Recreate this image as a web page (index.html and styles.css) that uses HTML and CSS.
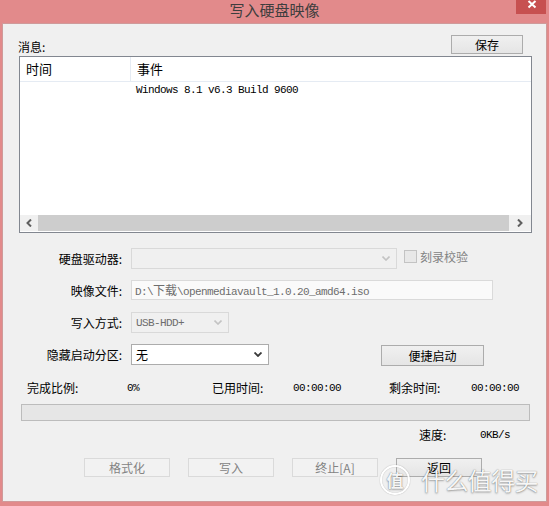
FILE: index.html
```html
<!DOCTYPE html>
<html lang="zh-CN">
<head>
<meta charset="utf-8">
<title>写入硬盘映像</title>
<link rel="stylesheet" href="styles.css">
</head>
<body>
<div class="titlebar">写入硬盘映像
  <div class="close"><svg width="30" height="14" viewBox="0 0 30 14"><path d="M12.5 1 L19.5 7.5 M19.5 1 L12.5 7.5" stroke="#fff" stroke-width="2" fill="none"/></svg></div>
</div>
<div class="client">
  <div class="top">
    <span class="lbl-msg">消息:</span>
    <div class="btn save">保存</div>
  </div>
  <div class="list">
    <div class="list-head">
      <div class="col1">时间</div>
      <div class="col2">事件</div>
    </div>
    <div class="list-body">
      <div class="row mono">Windows 8.1 v6.3 Build 9600</div>
    </div>
    <div class="hscroll">
      <div class="sb-btn sb-left"><svg width="6" height="8" viewBox="0 0 6 8"><path d="M5 0.5 L1.5 4 L5 7.5" stroke="#5f5f5f" stroke-width="2" fill="none"/></svg></div>
      <div class="sb-thumb"></div>
      <div class="sb-btn sb-right"><svg width="6" height="8" viewBox="0 0 6 8"><path d="M1 0.5 L4.5 4 L1 7.5" stroke="#5f5f5f" stroke-width="2" fill="none"/></svg></div>
    </div>
  </div>

  <div class="form">
    <div class="lbl">硬盘驱动器:</div>
    <div class="ctl">
      <div class="combo disabled w-drive"><span></span><svg width="8" height="5" viewBox="0 0 8 5"><path d="M0.5 0.5 L4 4 L7.5 0.5" stroke="#c3c3c3" stroke-width="1.6" fill="none"/></svg></div>
      <div class="check"></div>
      <span class="check-lbl">刻录校验</span>
    </div>

    <div class="lbl">映像文件:</div>
    <div class="ctl">
      <div class="input"><span class="mono">D:\</span>下载<span class="mono">\openmediavault_1.0.20_amd64.iso</span></div>
    </div>

    <div class="lbl">写入方式:</div>
    <div class="ctl">
      <div class="combo disabled w-mode"><span class="mono">USB-HDD+</span><svg width="8" height="5" viewBox="0 0 8 5"><path d="M0.5 0.5 L4 4 L7.5 0.5" stroke="#c3c3c3" stroke-width="1.6" fill="none"/></svg></div>
    </div>

    <div class="lbl">隐藏启动分区:</div>
    <div class="ctl">
      <div class="combo enabled w-hide"><span>无</span><svg width="8" height="5" viewBox="0 0 8 5"><path d="M0.5 0.5 L4 4 L7.5 0.5" stroke="#3a3a3a" stroke-width="1.8" fill="none"/></svg></div>
      <div class="btn quick">便捷启动</div>
    </div>
  </div>

  <div class="stats">
    <span>完成比例:</span>
    <span class="mono">0%</span>
    <span>已用时间:</span>
    <span class="mono">00:00:00</span>
    <span>剩余时间:</span>
    <span class="mono">00:00:00</span>
  </div>

  <div class="progress"></div>

  <div class="speed">
    <span class="speed-lbl">速度:</span>
    <span class="mono">0KB/s</span>
  </div>

  <div class="actions">
    <div class="btn act off">格式化</div>
    <div class="btn act off">写入</div>
    <div class="btn act off">终止[A]</div>
    <div class="btn act">返回</div>
  </div>
</div>

<div class="watermark">
  <div class="wm-logo">值</div>
  <div class="wm-text">什么值得买</div>
</div>
</body>
</html>
```

FILE: styles.css
```css
* { box-sizing: border-box; }
html, body { margin: 0; padding: 0; }
body {
  width: 549px;
  height: 506px;
  overflow: hidden;
  position: relative;
  background: #e28a8b;
  font-family: "Noto Sans CJK SC", "Liberation Sans", sans-serif;
  font-size: 12px;
  color: #000;
}
.mono {
  font-family: "Liberation Mono", "Noto Sans CJK SC", monospace;
  font-size: 11px;
  letter-spacing: -0.6px;
}
.titlebar {
  position: relative;
  height: 23px;
  line-height: 19px;
  text-align: center;
  font-size: 15px;
  color: #3e3e3e;
}
.close {
  position: absolute;
  top: 0;
  right: 3px;
  width: 30px;
  height: 14px;
  background: #c75050;
  line-height: 0;
}
.client {
  margin: 0 2px;
  height: 479px;
  background: #f0f0f0;
  border: 1px solid #cf9a9a;
}
.top {
  display: flex;
  justify-content: space-between;
  align-items: flex-end;
  height: 19px;
  margin: 11px 23px 0 15px;
}
.lbl-msg {
  line-height: 12px;
  margin-bottom: 1px;
}
.btn {
  height: 19px;
  border: 1px solid #acacac;
  background: linear-gradient(#f0f0f0, #e5e5e5);
  text-align: center;
  line-height: 17px;
  font-size: 12px;
}
.save { width: 72px; }

.list {
  margin: 2px 14px 0 16px;
  height: 177px;
  border: 1px solid #828790;
  background: #fff;
  display: flex;
  flex-direction: column;
}
.list-head {
  height: 25px;
  display: flex;
  border-bottom: 1px solid #e5ebf3;
  font-size: 13px;
  line-height: 24px;
}
.col1 {
  width: 111px;
  padding-left: 6px;
  border-right: 1px solid #e5ebf3;
}
.col2 { padding-left: 6px; }
.list-body {
  flex: 1;
  padding: 2px 0 0 116px;
}
.row { line-height: 12px; }
.hscroll {
  height: 16px;
  margin-bottom: 1px;
  display: flex;
  background: #f0f0f0;
}
.sb-btn {
  display: flex;
  align-items: center;
  justify-content: center;
}
.sb-left { width: 18px; }
.sb-right { width: 22px; }
.sb-thumb {
  flex: 1;
  background: #cdcdcd;
}

.form {
  margin-top: 15px;
  display: grid;
  grid-template-columns: 119px 1fr;
  grid-auto-rows: 21px;
  column-gap: 9px;
  row-gap: 11px;
}
.lbl {
  text-align: right;
  align-self: center;
  line-height: 12px;
}
.ctl {
  display: flex;
  align-items: flex-start;
}
.combo {
  height: 21px;
  display: flex;
  align-items: center;
  justify-content: space-between;
  padding: 0 6px 0 4px;
  line-height: 12px;
}
.combo svg { flex: none; }
.disabled {
  border: 1px solid #d9d9d9;
  background: #f0f0f0;
  color: #6d6d6d;
}
.enabled {
  border: 1px solid #acacac;
  background: #fff;
  color: #000;
}
.w-drive { width: 266px; }
.w-mode { width: 98px; }
.w-hide { width: 138px; }
.check {
  width: 13px;
  height: 13px;
  margin: 2px 0 0 7px;
  border: 1px solid #c3c3c3;
  background: #e8e8e8;
}
.check-lbl {
  margin: 2px 0 0 3px;
  line-height: 13px;
  color: #838383;
  font-size: 12px;
}
.input {
  width: 362px;
  height: 20px;
  border: 1px solid #dadada;
  background: #fafafa;
  color: #6d6d6d;
  padding-left: 3px;
  line-height: 18px;
  white-space: nowrap;
}
.quick {
  width: 103px;
  height: 21px;
  line-height: 19px;
  margin: 1px 0 0 112px;
}

.stats {
  margin-top: 17px;
  padding-left: 24px;
  display: grid;
  grid-template-columns: 100px 85px 81px 96px 82px auto;
  height: 12px;
  line-height: 12px;
}
.progress {
  margin: 10px 16px 0 18px;
  height: 17px;
  border: 1px solid #bcbcbc;
  background: #e6e6e6;
}
.speed {
  margin-top: 8px;
  padding-left: 416px;
  display: flex;
  height: 12px;
  line-height: 12px;
}
.speed-lbl { width: 61px; }

.actions {
  margin-top: 17px;
  padding-left: 81px;
  display: flex;
  gap: 18px;
}
.act { width: 86px; }
.off {
  border-color: #dadada;
  background: #f2f2f2;
  color: #838383;
}

.watermark {
  position: absolute;
  left: 380px;
  top: 465px;
  display: flex;
  align-items: center;
  gap: 11px;
  color: rgba(255, 255, 255, 0.95);
  text-shadow: 0 0 1px rgba(0, 0, 0, 0.45), 0 1px 2px rgba(0, 0, 0, 0.3);
  pointer-events: none;
}
.wm-logo {
  width: 30px;
  height: 30px;
  border-radius: 50%;
  border: 2.5px solid rgba(255, 255, 255, 0.95);
  box-shadow: 0 0 1px rgba(0, 0, 0, 0.45), inset 0 0 1px rgba(0, 0, 0, 0.35);
  font-size: 17px;
  font-weight: 700;
  line-height: 25px;
  text-align: center;
}
.wm-text {
  font-size: 24px;
  line-height: 30px;
  letter-spacing: -0.6px;
}
```
